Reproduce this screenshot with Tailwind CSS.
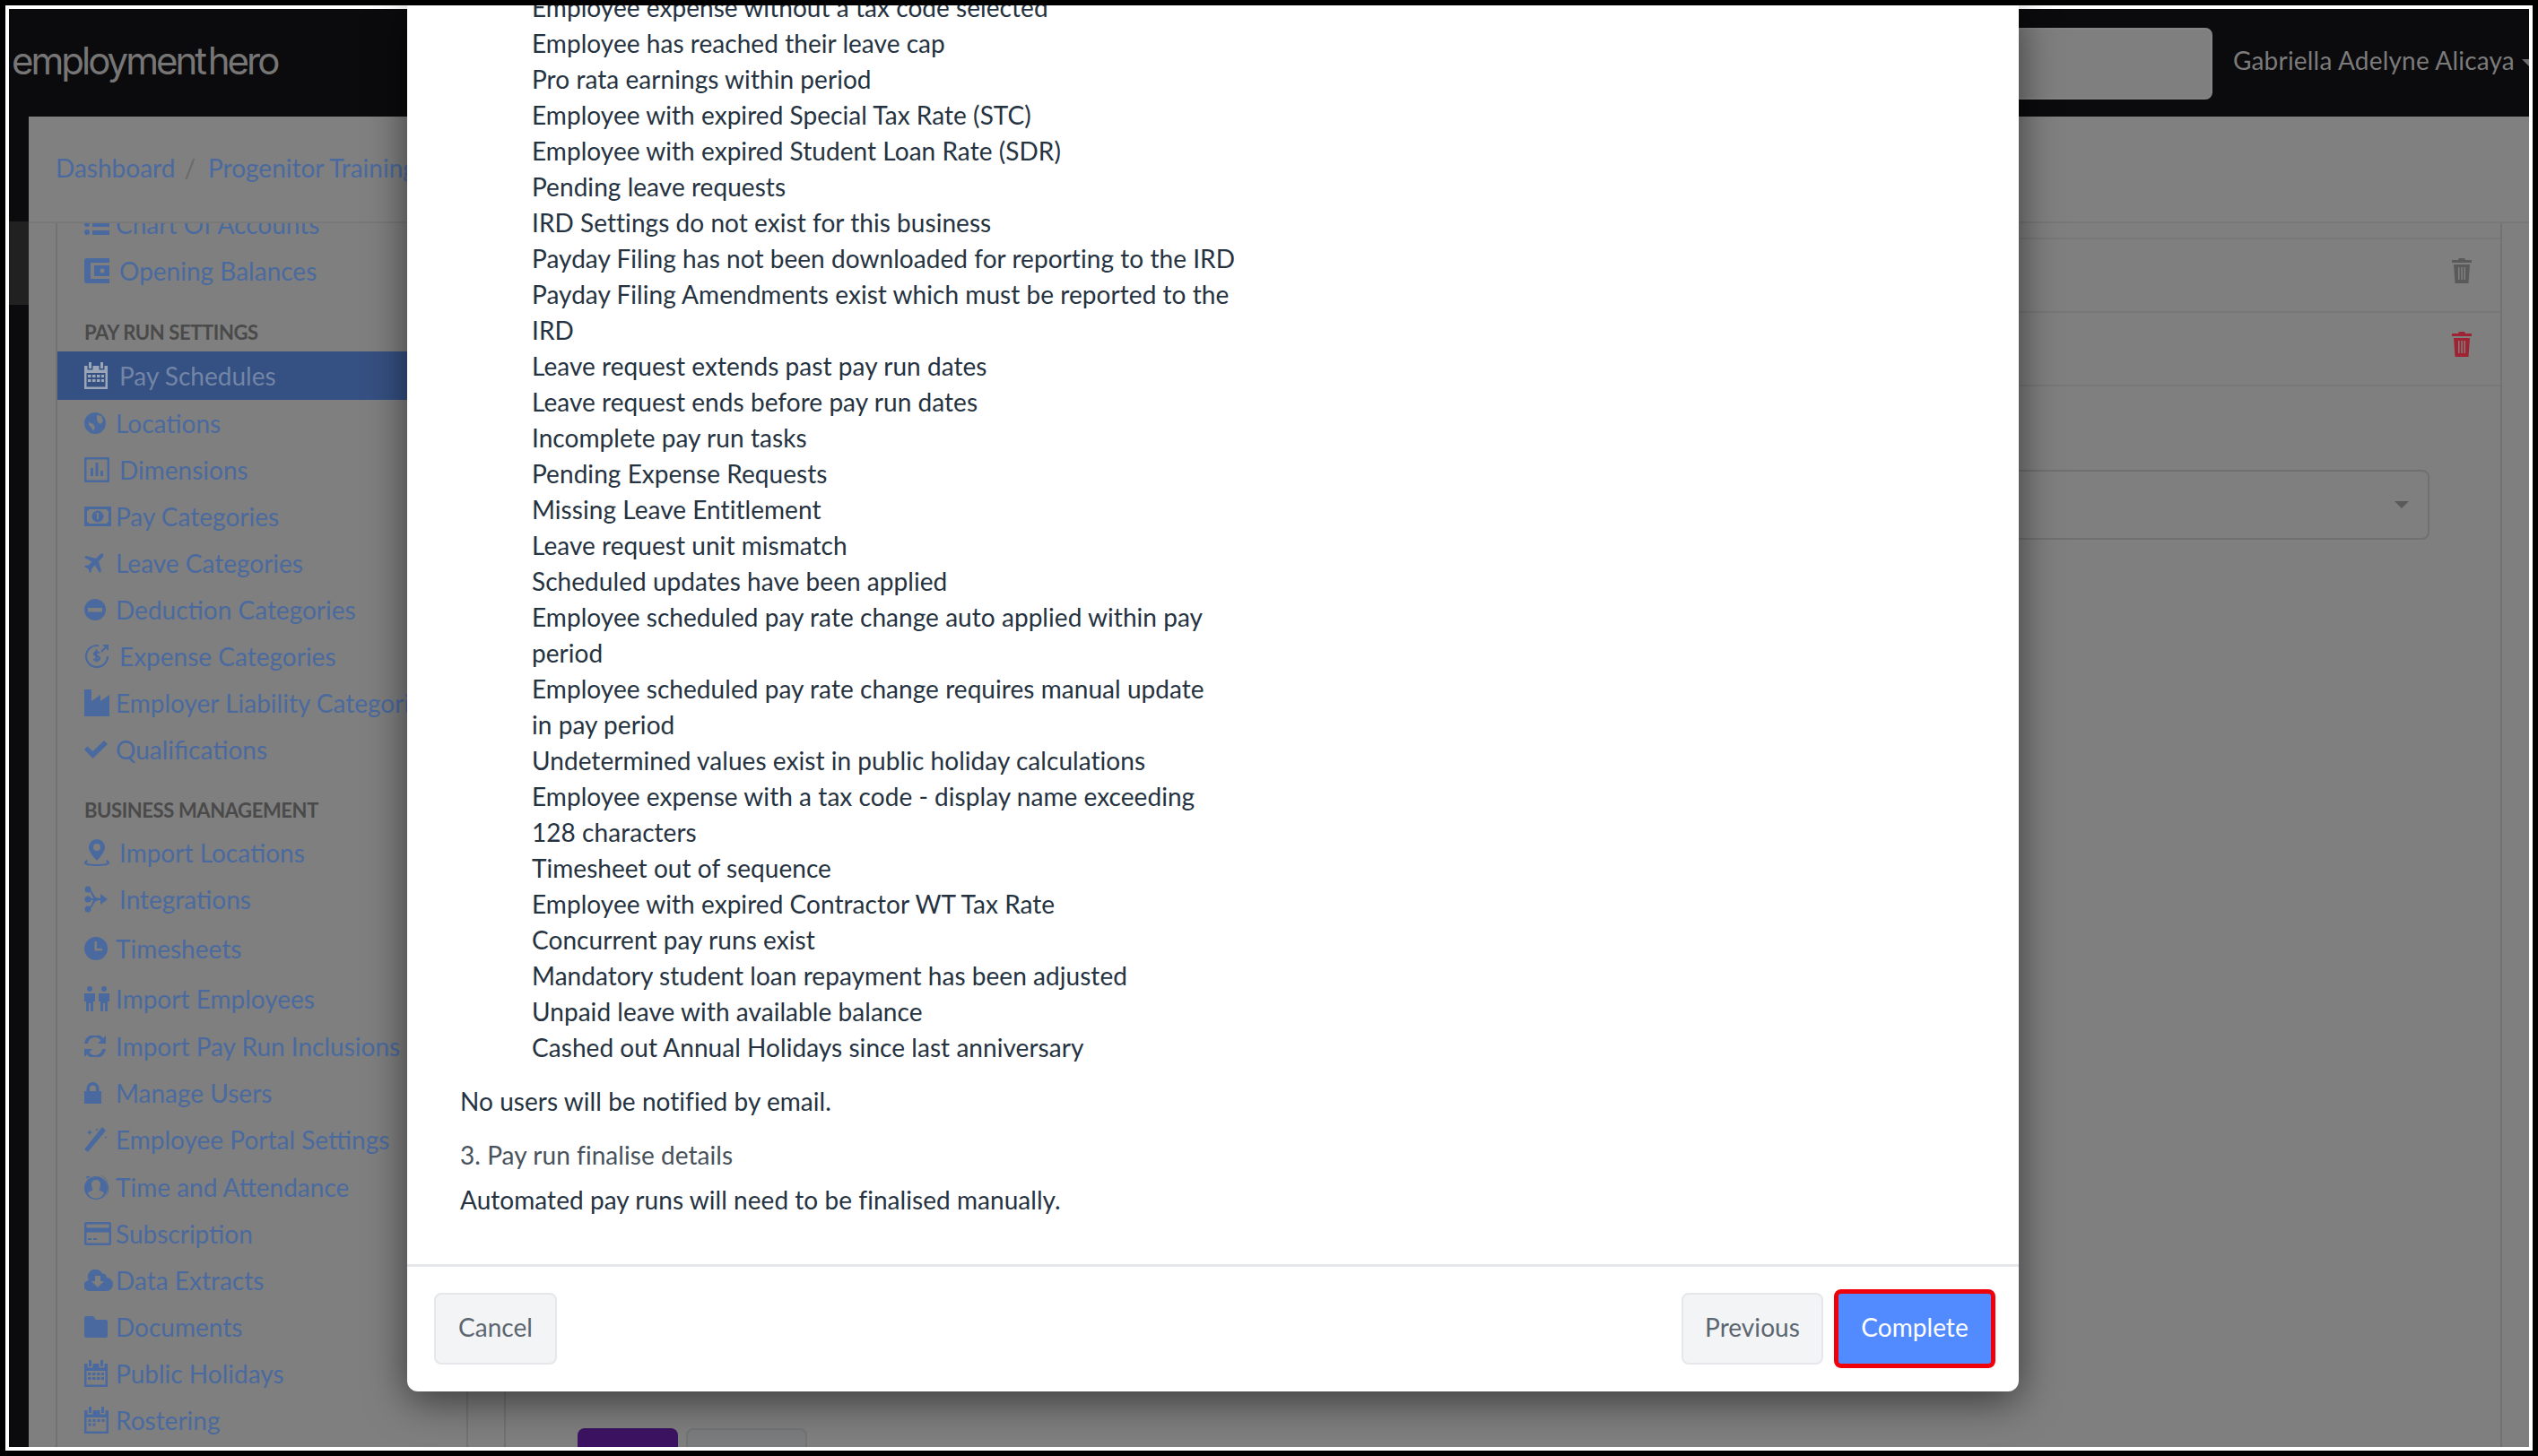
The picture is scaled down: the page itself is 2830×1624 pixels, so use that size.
<!DOCTYPE html>
<html lang="en">
<head>
<meta charset="UTF-8">
<title>Pay Schedules</title>
<script src="https://cdn.jsdelivr.net/npm/@tailwindcss/browser@4"></script>
</head>
<body class="bg-black">
<div class="w-[2830px] h-[1624px] overflow-hidden bg-black p-[6px] font-['Lato',sans-serif]">
  <div class="relative h-full border-4 border-white bg-[#7f7f7f] flex flex-col">

    <!-- top bar -->
    <header class="h-[120px] shrink-0 bg-[#0b0a0c] flex items-center pl-[3px] overflow-hidden">
      <span class="mb-[6px] font-['Inter',sans-serif] text-[42px] text-[#767676] tracking-[-3px] [word-spacing:-5px] whitespace-nowrap">employment hero</span>
      <div class="ml-auto w-[500px] h-[80px] mt-[2px] rounded-lg bg-[#7f7f7f] border-2 border-[#858585]"></div>
      <span class="ml-[23px] mb-[6px] text-[28px] text-[#7b7b7b] tracking-[0.2px] whitespace-nowrap">Gabriella Adelyne Alicaya</span>
      <svg class="ml-[8px] -mr-[8px] shrink-0" width="16" height="8" viewBox="0 0 16 8"><path d="M0 0h16L8 8z" fill="#6b6b6b"/></svg>
    </header>

    <div class="flex-1 flex min-h-0">
      <!-- dark strip on the far left -->
      <div class="w-[22px] shrink-0 bg-[#0b0a0c] pt-[117px]">
        <div class="h-[93px] bg-[#222122]"></div>
      </div>

      <div class="flex-1 flex flex-col min-w-0">
        <!-- breadcrumb -->
        <div class="h-[119px] shrink-0 bg-[#808080] border-b-2 border-[#787878] flex items-center pl-[30px] pb-[3px] text-[28px] text-[#4a6a9f] whitespace-nowrap">
          <span>Dashboard</span>
          <span class="ml-[10px] text-[#6a6a6a]">/</span>
          <span class="ml-[14px]">Progenitor Training</span>
        </div>

        <div class="flex-1 flex min-h-0">
          <!-- sidebar -->
          <aside class="w-[490px] shrink-0 pl-[30px] overflow-hidden">
            <div class="h-[calc(100%+25px)] border-l-2 border-r-2 border-[#727272] -mt-[25px] text-[28px] text-[#4a6a9f] whitespace-nowrap">
              <div class="h-[52px] flex items-center pl-[30px]">
                <svg preserveAspectRatio="xMinYMid" class="w-[35px] shrink-0" width="28" height="28" viewBox="0 0 28 28" fill="currentColor"><circle cx="3" cy="5" r="3"/><circle cx="3" cy="14" r="3"/><circle cx="3" cy="23" r="3"/><rect x="9" y="3" width="19" height="5"/><rect x="9" y="12" width="19" height="5"/><rect x="9" y="21" width="19" height="5"/></svg>
                <span>Chart Of Accounts</span>
              </div>
              <div class="h-[52px] flex items-center pl-[30px]">
                <svg preserveAspectRatio="xMinYMid" class="w-[39px] shrink-0" width="28" height="28" viewBox="0 0 28 28" fill="currentColor"><path d="M3 0h25v5H7v18h21v5H3a3 3 0 0 1-3-3V3a3 3 0 0 1 3-3z"/><path d="M11 8h17v12H11zm9 3.500a2.500 2.500 0 1 0 0 5 2.500 2.500 0 0 0 0-5z" fill-rule="evenodd"/></svg>
                <span>Opening Balances</span>
              </div>
              <div class="h-[64px] flex items-end pb-[5px] pl-[30px] text-[22px] font-bold text-[#4a4a4a] tracking-[-0.4px]">PAY RUN SETTINGS</div>
              <div class="h-[54px] flex items-center pl-[30px] bg-[#355082] text-[#7385a5]">
                <svg preserveAspectRatio="xMinYMid" class="w-[39px] shrink-0" width="26" height="30" viewBox="0 0 26 30" fill="#9aa5b8"><path d="M5 0h3v7H5zm13 0h3v7h-3zM0 4h3.500v4.500h6V4h7v4.500h6V4H26v26H0zm2.500 8v15.500h21V12zm1.500 2h3.500v3H4zm5 0h3.500v3H9zm5 0h3.500v3H14zm5 0h3v3h-3zM4 19h3.500v3H4zm5 0h3.500v3H9zm5 0h3.500v3H14zm5 0h3v3h-3z" fill-rule="evenodd"/></svg>
                <span>Pay Schedules</span>
              </div>
              <div class="h-[52px] flex items-center pl-[30px]">
                <svg preserveAspectRatio="xMinYMid" class="w-[35px] shrink-0" width="24" height="24" viewBox="0 0 24 24" fill="currentColor"><path d="M12 0a12 12 0 1 0 0 24 12 12 0 0 0 0-24zm2 3 5 1 2 6-3 3-3-2-1-3zM5 11l5 2 2 4-2 4-2-4-3-3z" fill-rule="evenodd"/></svg>
                <span>Locations</span>
              </div>
              <div class="h-[52px] flex items-center pl-[30px]">
                <svg preserveAspectRatio="xMinYMid" class="w-[39px] shrink-0" width="28" height="28" viewBox="0 0 28 28" fill="currentColor"><path d="M0 0h28v28H0zm2.500 2.500v23h23v-23zM7 12h3v9H7zm5.500-6h3v15h-3zm5.500 9h3v6h-3z" fill-rule="evenodd"/></svg>
                <span>Dimensions</span>
              </div>
              <div class="h-[52px] flex items-center pl-[30px]">
                <svg preserveAspectRatio="xMinYMid" class="w-[35px] shrink-0" width="30" height="22" viewBox="0 0 30 22" fill="currentColor"><path d="M0 0h30v22H0zm5 3a2 2 0 0 1-2 2v12a2 2 0 0 1 2 2h20a2 2 0 0 1 2-2V5a2 2 0 0 1-2-2zm10 1.500a6.500 6.500 0 1 1 0 13 6.500 6.500 0 0 1 0-13zM14 8v6h2V7h-2l-2 1z" fill-rule="evenodd"/></svg>
                <span>Pay Categories</span>
              </div>
              <div class="h-[52px] flex items-center pl-[30px]">
                <svg preserveAspectRatio="xMinYMid" class="w-[35px] shrink-0" width="22" height="22" viewBox="0 0 22 22" fill="currentColor"><path d="M20.500.500c1.500 1 1 3-.5 4.500l-4 4 3 11-2 2-5-8.500-4 4v3l-2 1.500-1.500-4.500L0 15l1.500-1.500h3l4-4L0 5l2-2 11 3 4-4c1-1 2.500-2 3.500-1.500z"/></svg>
                <span>Leave Categories</span>
              </div>
              <div class="h-[52px] flex items-center pl-[30px]">
                <svg preserveAspectRatio="xMinYMid" class="w-[35px] shrink-0" width="24" height="24" viewBox="0 0 24 24" fill="currentColor"><path d="M12 0a12 12 0 1 0 0 24 12 12 0 0 0 0-24zM4 10h16v4.500H4z" fill-rule="evenodd"/></svg>
                <span>Deduction Categories</span>
              </div>
              <div class="h-[52px] flex items-center pl-[30px]">
                <svg preserveAspectRatio="xMinYMid" class="w-[39px] shrink-0" width="28" height="28" viewBox="0 0 28 28" fill="none" stroke="currentColor" stroke-width="2.200"><path d="M26 14a12 12 0 1 1-10-11.800"/><path d="M19 9l7-7m-5 0h5v5"/><path d="M17 10.500c-1-1.500-5.500-2-6 .5-.4 3 6 2 6 5.500 0 2.500-5 2.500-6.500.5M13.500 6.500v14"/></svg>
                <span>Expense Categories</span>
              </div>
              <div class="h-[52px] flex items-center pl-[30px]">
                <svg preserveAspectRatio="xMinYMid" class="w-[35px] shrink-0" width="28" height="30" viewBox="0 0 28 30" fill="currentColor"><path d="M0 0h8v13l10-7v7l10-7v24H0z"/></svg>
                <span>Employer Liability Categories</span>
              </div>
              <div class="h-[52px] flex items-center pl-[30px]">
                <svg preserveAspectRatio="xMinYMid" class="w-[35px] shrink-0" width="26" height="20" viewBox="0 0 26 20" fill="currentColor"><path d="M0 10l3.500-3.500L9.500 12 22 0l4 4L9.500 20z"/></svg>
                <span>Qualifications</span>
              </div>
              <div class="h-[63px] flex items-end pb-[5px] pl-[30px] text-[22px] font-bold text-[#4a4a4a] tracking-[-0.4px]">BUSINESS MANAGEMENT</div>
              <div class="h-[52px] flex items-center pl-[30px]">
                <svg preserveAspectRatio="xMinYMid" class="w-[39px] shrink-0" width="28" height="30" viewBox="0 0 28 30" fill="currentColor"><path d="M14 0a9 9 0 0 1 9 9c0 5-6 12-9 15-3-3-9-10-9-15a9 9 0 0 1 9-9zm0 5a4 4 0 1 0 0 8 4 4 0 0 0 0-8z" fill-rule="evenodd"/><path d="M3 23c-2 1-3 2-3 3.500C0 29 6 30 14 30s14-1 14-3.500c0-1.500-1-2.500-3-3.500l-1 2c1 .500 1.500 1 1.500 1.500 0 .5-5 1.500-11.500 1.500S2.500 27 2.500 26.500c0-.5.500-1 1.500-1.500z"/></svg>
                <span>Import Locations</span>
              </div>
              <div class="h-[52px] flex items-center pl-[30px]">
                <svg preserveAspectRatio="xMinYMid" class="w-[39px] shrink-0" width="26" height="30" viewBox="0 0 26 30" fill="currentColor"><circle cx="4" cy="4" r="3.500"/><circle cx="4" cy="15" r="3.500"/><circle cx="4" cy="26" r="3.500"/><path d="M4 4c7 0 5 10 13 10v2C9 16 11 26 4 26v-2c5 0 4-8 8-9-4-1-3-9-8-9z"/><path d="M4 14h14v2H4zM18 9l8 6-8 6z"/></svg>
                <span>Integrations</span>
              </div>
              <div class="h-[58px] flex items-center pl-[30px]">
                <svg preserveAspectRatio="xMinYMid" class="w-[35px] shrink-0" width="26" height="26" viewBox="0 0 26 26" fill="currentColor"><path d="M13 0a13 13 0 1 0 0 26 13 13 0 0 0 0-26zm-1.500 5H14v8h6v2.500h-8.500z" fill-rule="evenodd"/></svg>
                <span>Timesheets</span>
              </div>
              <div class="h-[54px] flex items-center pl-[30px]">
                <svg preserveAspectRatio="xMinYMid" class="w-[35px] shrink-0" width="28" height="28" viewBox="0 0 28 28" fill="currentColor"><circle cx="6" cy="3" r="3"/><circle cx="22" cy="3" r="3"/><path d="M0 8h12v9h-2v11H7v-9H5v9H2V17H0zm16 0h12v9h-2v11h-3v-9h-2v9h-3V17h-2z"/></svg>
                <span>Import Employees</span>
              </div>
              <div class="h-[52px] flex items-center pl-[30px]">
                <svg preserveAspectRatio="xMinYMid" class="w-[35px] shrink-0" width="24" height="24" viewBox="0 0 24 24" fill="currentColor"><path d="M24 0v9h-9l3.500-3.500A8 8 0 0 0 4 9H0a12 12 0 0 1 21-6zM0 24v-9h9l-3.500 3.500A8 8 0 0 0 20 15h4a12 12 0 0 1-21 6z"/></svg>
                <span>Import Pay Run Inclusions</span>
              </div>
              <div class="h-[52px] flex items-center pl-[30px]">
                <svg preserveAspectRatio="xMinYMid" class="w-[35px] shrink-0" width="19" height="24" viewBox="0 0 19 24" fill="currentColor"><path d="M9.500 0A7 7 0 0 1 16.500 7v3H19v14H0V10h2.500V7A7 7 0 0 1 9.500 0zm0 3.500A3.500 3.500 0 0 0 6 7v3h7V7a3.500 3.500 0 0 0-3.500-3.500z" fill-rule="evenodd"/></svg>
                <span>Manage Users</span>
              </div>
              <div class="h-[52px] flex items-center pl-[30px]">
                <svg preserveAspectRatio="xMinYMid" class="w-[35px] shrink-0" width="26" height="28" viewBox="0 0 26 28" fill="currentColor"><path d="M20 0l4 4L4 28l-4-3zM6 3l1 2 2 1-2 1-1 2-1-2-2-1 2-1z"/><path d="M14 1l.5 1.500L16 3l-1.500.5L14 5l-.5-1.500L12 3l1.500-.5zM24 10l.5 1 1 .5-1 .5-.5 1-.5-1-1-.5 1-.5z"/></svg>
                <span>Employee Portal Settings</span>
              </div>
              <div class="h-[53px] flex items-center pl-[30px]">
                <svg preserveAspectRatio="xMinYMid" class="w-[35px] shrink-0" width="28" height="30" viewBox="0 0 28 30" fill="currentColor"><path d="M13 3a13 13 0 1 0 0 26 13 13 0 0 0 0-26zm0 4a5 5 0 0 1 5 6c-.4 3-1.500 4-1.500 5 0 1 5 2 5.500 4a10 10 0 0 1-18 0c.5-2 5.500-3 5.500-4 0-1-1.100-2-1.500-5a5 5 0 0 1 5-6z" fill-rule="evenodd"/><path d="M16 1a14 14 0 0 1 11 14 14 14 0 0 1-7 14 13.500 13.500 0 0 0 6-14A13.500 13.500 0 0 0 16 1zM2 3h5L3 6z"/></svg>
                <span>Time and Attendance</span>
              </div>
              <div class="h-[52px] flex items-center pl-[30px]">
                <svg preserveAspectRatio="xMinYMid" class="w-[35px] shrink-0" width="30" height="26" viewBox="0 0 30 26" fill="currentColor"><path d="M2 0h26a2 2 0 0 1 2 2v22a2 2 0 0 1-2 2H2a2 2 0 0 1-2-2V2a2 2 0 0 1 2-2zm.500 2.500v4h25v-4zm0 9v12h25v-12zM4 18h4v2H4zm6 0h4v2h-4z" fill-rule="evenodd"/></svg>
                <span>Subscription</span>
              </div>
              <div class="h-[52px] flex items-center pl-[30px]">
                <svg preserveAspectRatio="xMinYMid" class="w-[35px] shrink-0" width="30" height="24" viewBox="0 0 30 24" fill="currentColor"><path d="M13 0a8 8 0 0 1 7 4.500 5 5 0 0 1 5 4.500 7.500 7.500 0 0 1-1 15H6a6 6 0 0 1-1-12 8 8 0 0 1 8-12zm-1 7v6H8l7 7 7-7h-4V7z" fill-rule="evenodd"/></svg>
                <span>Data Extracts</span>
              </div>
              <div class="h-[52px] flex items-center pl-[30px]">
                <svg preserveAspectRatio="xMinYMid" class="w-[35px] shrink-0" width="26" height="24" viewBox="0 0 26 24" fill="currentColor"><path d="M2 0h8l3 4h11a2 2 0 0 1 2 2v16a2 2 0 0 1-2 2H2a2 2 0 0 1-2-2V2a2 2 0 0 1 2-2z"/></svg>
                <span>Documents</span>
              </div>
              <div class="h-[52px] flex items-center pl-[30px]">
                <svg preserveAspectRatio="xMinYMid" class="w-[35px] shrink-0" width="26" height="30" viewBox="0 0 26 30" fill="currentColor"><path d="M5 0h3v7H5zm13 0h3v7h-3zM0 4h3.500v4.500h6V4h7v4.500h6V4H26v26H0zm2.500 8v15.500h21V12zm1.500 2h3.500v3H4zm5 0h3.500v3H9zm5 0h3.500v3H14zm5 0h3v3h-3zM4 19h3.500v3H4zm5 0h3.500v3H9zm5 0h3.500v3H14zm5 0h3v3h-3z" fill-rule="evenodd"/></svg>
                <span>Public Holidays</span>
              </div>
              <div class="h-[52px] flex items-center pl-[30px]">
                <svg preserveAspectRatio="xMinYMid" class="w-[35px] shrink-0" width="27" height="30" viewBox="0 0 27 30" fill="currentColor"><path d="M5 0h3v7H5zm14 0h3v7h-3zM0 4h3.500v4.500h6V4h8v4.500h6V4H27v26H0zm2.500 8v15.500h22V12zm2 2h3v3h-3zm5 0h3v3h-3zm5 0h3v3h-3zm5 0h3v3h-3zm-15 4.500h3v3h-3zm5 0h3v3h-3z" fill-rule="evenodd"/></svg>
                <span>Rostering</span>
              </div>
            </div>
          </aside>

          <!-- main panel, mostly behind the modal -->
          <main class="flex-1 min-w-0 ml-[40px] mr-[30px] border-l-2 border-r-2 border-[#727272] overflow-hidden">
            <div class="h-[18px] border-b-2 border-[#777777]"></div>
            <div class="h-[82px] border-b-2 border-[#777777] flex items-center justify-end pr-[32px] pb-[10px]">
              <svg width="22" height="28" viewBox="0 0 22 28" fill="#5a5a5a"><path d="M8 0h6l1 2h7v3H0V2h7zM2 7h18l-1.500 21h-15zm5 3v14h1.500V10zm3.300 0v14h1.500V10zm3.200 0v14H15V10z" fill-rule="evenodd"/></svg>
            </div>
            <div class="h-[82px] border-b-2 border-[#777777] flex items-center justify-end pr-[32px] pb-[10px]">
              <svg width="22" height="28" viewBox="0 0 22 28" fill="#a02334"><path d="M8 0h6l1 2h7v3H0V2h7zM2 7h18l-1.500 21h-15zm5 3v14h1.500V10zm3.300 0v14h1.500V10zm3.200 0v14H15V10z" fill-rule="evenodd"/></svg>
            </div>
            <div class="mt-[93px] mr-[79px] h-[78px] rounded-lg border-2 border-[#707070] flex items-center justify-end pr-[21px]">
              <svg width="16" height="8" viewBox="0 0 16 8"><path d="M0 0h16L8 8z" fill="#5a5a5a"/></svg>
            </div>
            <div class="mt-[991px] ml-[80px] flex gap-[9px]">
              <div class="w-[112px] h-[60px] rounded-t-lg bg-[#3c1362]"></div>
              <div class="w-[135px] h-[60px] rounded-t-lg bg-[#7a7c7e] border-2 border-[#727476]"></div>
            </div>
          </main>
        </div>
      </div>
    </div>

    <!-- modal -->
    <div class="absolute left-[444px] -top-[4px] w-[1797px] h-[1546px] bg-white rounded-b-xl shadow-[0_10px_45px_rgba(0,0,0,0.55)] flex flex-col text-[#25323f] text-[28px] leading-[40px] tracking-[0.05px]">
      <div class="flex-1 min-h-0 overflow-hidden flex flex-col justify-end pl-[59px] pb-[52px]">
        <ul class="pl-[80px] whitespace-nowrap">
          <li>Employee expense without a tax code selected</li>
          <li>Employee has reached their leave cap</li>
          <li>Pro rata earnings within period</li>
          <li>Employee with expired Special Tax Rate (STC)</li>
          <li>Employee with expired Student Loan Rate (SDR)</li>
          <li>Pending leave requests</li>
          <li>IRD Settings do not exist for this business</li>
          <li>Payday Filing has not been downloaded for reporting to the IRD</li>
          <li>Payday Filing Amendments exist which must be reported to the<br>IRD</li>
          <li>Leave request extends past pay run dates</li>
          <li>Leave request ends before pay run dates</li>
          <li>Incomplete pay run tasks</li>
          <li>Pending Expense Requests</li>
          <li>Missing Leave Entitlement</li>
          <li>Leave request unit mismatch</li>
          <li>Scheduled updates have been applied</li>
          <li>Employee scheduled pay rate change auto applied within pay<br>period</li>
          <li>Employee scheduled pay rate change requires manual update<br>in pay period</li>
          <li>Undetermined values exist in public holiday calculations</li>
          <li>Employee expense with a tax code - display name exceeding<br>128 characters</li>
          <li>Timesheet out of sequence</li>
          <li>Employee with expired Contractor WT Tax Rate</li>
          <li>Concurrent pay runs exist</li>
          <li>Mandatory student loan repayment has been adjusted</li>
          <li>Unpaid leave with available balance</li>
          <li>Cashed out Annual Holidays since last anniversary</li>
        </ul>
        <p class="mt-[20px]">No users will be notified by email.</p>
        <h4 class="mt-[20px] text-[#47525c]">3. Pay run finalise details</h4>
        <p class="mt-[10px]">Automated pay runs will need to be finalised manually.</p>
      </div>
      <footer class="h-[142px] shrink-0 border-t-[3px] border-[#e5e7eb] flex items-center pl-[30px] pr-[26px] pb-[2px] text-[#5b6670]">
        <button class="w-[137px] h-[80px] pb-[3px] rounded-lg bg-[#f3f4f6] border-2 border-[#e5e7eb]">Cancel</button>
        <button class="ml-auto w-[158px] h-[80px] pb-[3px] rounded-lg bg-[#f3f4f6] border-2 border-[#e5e7eb]">Previous</button>
        <button class="ml-[12px] w-[180px] h-[88px] pb-[3px] rounded-lg bg-[#528bff] border-[5px] border-[#f00008] text-white">Complete</button>
      </footer>
    </div>
  </div>
</div>
</body>
</html>
